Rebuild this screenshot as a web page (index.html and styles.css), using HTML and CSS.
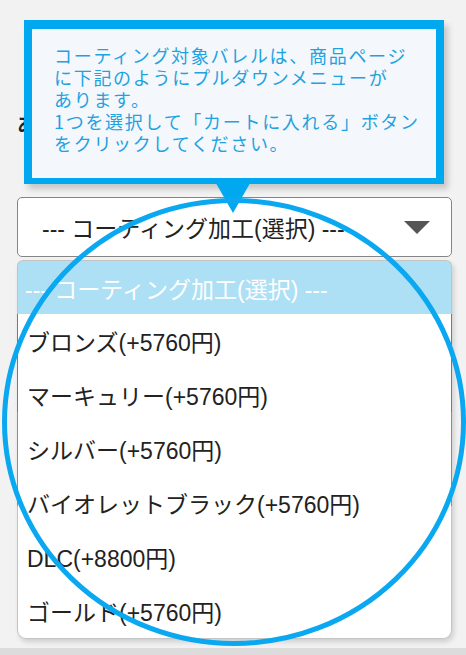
FILE: index.html
```html
<!DOCTYPE html>
<html lang="ja">
<head>
    <meta charset="UTF-8">
    <meta name="viewport" content="width=device-width, initial-scale=1.0">
    <title>コーティング加工の選択</title>
    <link rel="stylesheet" href="styles.css">
</head>
<body>

<div class="pagina">
    <!-- Rótulo da opção (quase todo escondido pelo balão) -->
    <p class="rotulo">あ</p>

    <!-- Select fechado -->
    <div class="seletor">
        <span>--- コーティング加工(選択) ---</span>
        <span class="seta"></span>
    </div>

    <!-- Lista aberta do select -->
    <ul class="lista">
        <li class="ativo">--- コーティング加工(選択) ---</li>
        <li>ブロンズ(+5760円)</li>
        <li>マーキュリー(+5760円)</li>
        <li>シルバー(+5760円)</li>
        <li>バイオレットブラック(+5760円)</li>
        <li>DLC(+8800円)</li>
        <li>ゴールド(+5760円)</li>
    </ul>
</div>

<div class="rodape"></div>

<!-- Balão de explicação -->
<div class="balao">
    コーティング対象バレルは、商品ページ<br>
    に下記のようにプルダウンメニューが<br>
    あります。<br>
    1つを選択して「カートに入れる」ボタン<br>
    をクリックしてください。
</div>

<!-- Círculo de destaque -->
<svg class="circulo" width="466" height="655" viewBox="0 0 466 655">
    <ellipse cx="234" cy="422" rx="229.5" ry="221.5" fill="none" stroke="#0aa8f0" stroke-width="5"/>
</svg>

</body>
</html>
```

FILE: styles.css
```css
/* Estilos gerais */
body {
    margin: 0;
    background-color: #f2f2f2;
    font-family: "Liberation Sans", "Noto Sans CJK JP", sans-serif;
    color: #222;
    width: 466px;
    height: 655px;
    overflow: hidden;
    position: relative;
}

.pagina {
    padding: 0 14px 0 17px;
}

.rotulo {
    margin: 0 0 59px 0;
    padding-top: 112px;
    line-height: 26px;
    font-size: 20px;
    font-weight: bold;
}

/* Select fechado */
.seletor {
    height: 60px;
    box-sizing: border-box;
    border: 1.5px solid #858585;
    border-radius: 5px;
    background-color: #fff;
    display: flex;
    align-items: center;
    justify-content: space-between;
    padding: 0 21px 0 24px;
    font-size: 23px;
}

.seta {
    width: 0;
    height: 0;
    border-left: 13px solid transparent;
    border-right: 13px solid transparent;
    border-top: 13px solid #555;
}

/* Lista aberta: a borda vem do fundo (parte verde do botão de trás) */
.lista {
    list-style: none;
    margin: 3px 0 0 0;
    padding: 1px;
    background: linear-gradient(to bottom, #c4c4c4 54px, #7a7a7a 54px, #7a7a7a 152px, #6fae3a 152px, #6fae3a 246px, #c4c4c4 246px);
    border-radius: 6px 6px 9px 9px;
    box-shadow: 2px 3px 5px rgba(0, 0, 0, 0.15);
    overflow: hidden;
}

.lista li {
    height: 54px;
    display: flex;
    align-items: center;
    padding-left: 9px;
    font-size: 23px;
    color: #222;
    background-color: #fff;
}

.lista li:last-child {
    border-radius: 0 0 8px 8px;
}

.lista li.ativo {
    height: 53px;
    background-color: #ade0f5;
    color: #fff;
    padding-left: 7px;
    border-radius: 5px 5px 0 0;
}

.rodape {
    position: absolute;
    left: 0;
    right: 0;
    bottom: 0;
    height: 7px;
    background-color: #dcdcdc;
}

/* Balão */
.balao {
    position: absolute;
    left: 24px;
    top: 20px;
    width: 420px;
    height: 164px;
    box-sizing: border-box;
    border: 8px solid #00a8f0;
    border-top-width: 9px;
    border-bottom-width: 6px;
    background-color: #f4f8fc;
    box-shadow: 4px 5px 6px rgba(0, 0, 0, 0.18);
    padding: 15px 0 0 22px;
    font-family: "Noto Sans CJK JP", sans-serif;
    font-size: 18px;
    line-height: 22px;
    letter-spacing: 1.7px;
    color: #1ea2e0;
    white-space: nowrap;
}

.balao::after {
    content: "";
    position: absolute;
    left: 181px;
    top: 100%;
    width: 0;
    height: 0;
    border-left: 20px solid transparent;
    border-right: 20px solid transparent;
    border-top: 35px solid #00a8f0;
}

.circulo {
    position: absolute;
    left: 0;
    top: 0;
    pointer-events: none;
}
```
